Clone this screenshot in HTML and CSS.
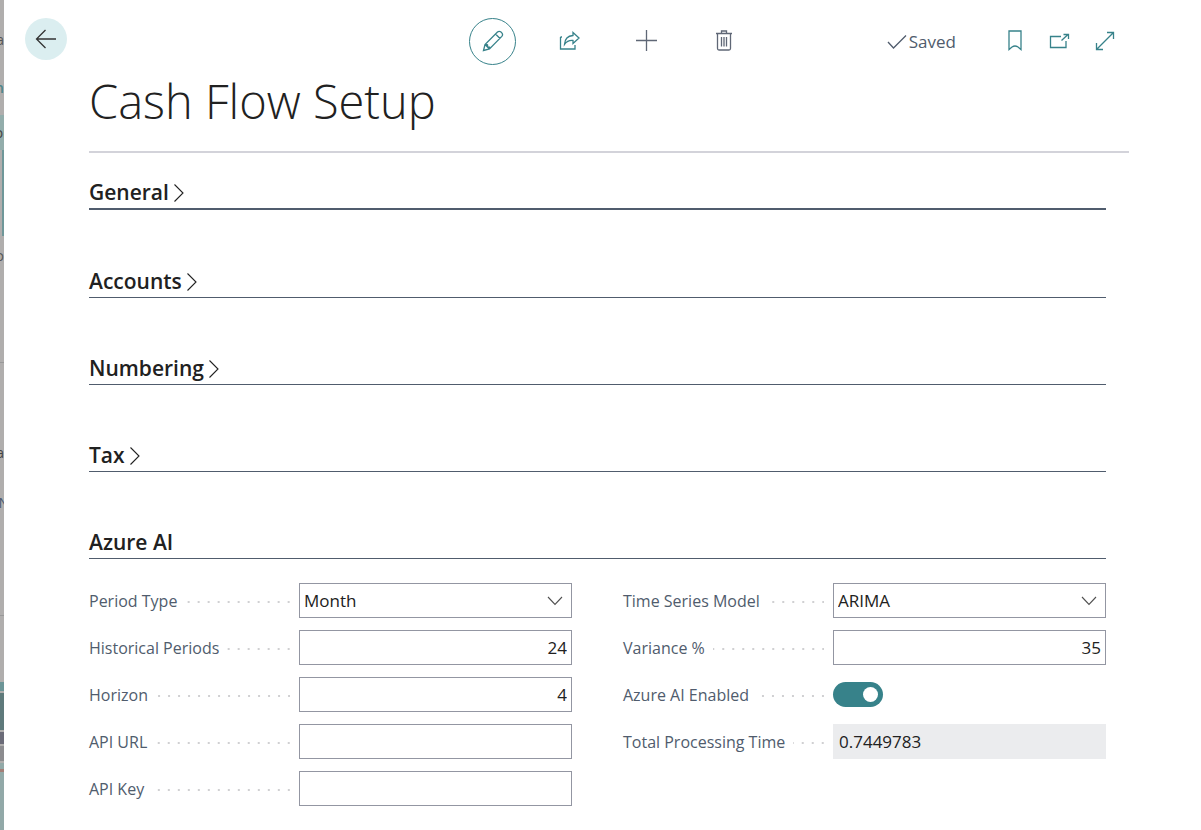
FILE: index.html
```html
<!DOCTYPE html>
<html lang="en">
<head>
  <meta charset="UTF-8">
  <title>Cash Flow Setup</title>
  <link rel="stylesheet" href="styles.css">
</head>
<body>

  <!-- dimmed page behind the card -->
  <div class="behind" aria-hidden="true">
    <div class="band band-top">a</div>
    <div class="band band-brand">n</div>
    <div class="band band-menu"><span class="peek">or</span></div>
    <div class="band band-tile"></div>
    <div class="band band-link">o</div>
    <div class="band band-a">a</div>
    <div class="band band-n"><span class="peek">N</span></div>
    <div class="band band-space"></div>
    <div class="band band-teal"></div>
    <div class="band band-dark"></div>
    <div class="band band-slate"></div>
    <div class="band band-grey"></div>
    <div class="band band-chart"></div>
  </div>

  <div class="back">
    <button class="back-button" aria-label="Back">
      <svg width="22" height="20" viewBox="0 0 22 20"><path d="M21 10H2M10.500 1L1.500 10l9 9"/></svg>
    </button>
  </div>

  <main class="page">
    <header class="toolbar">
      <div class="actions">
        <button class="action action-edit" aria-label="Edit">
          <svg width="22" height="22" viewBox="0 0 22 22"><path d="M1.500 20.500L3 14.500L15.500 2q1.500-1.300 3.200-.2l1.300 1.300q1.200 1.700-.2 3.300L7.500 19zM3 14.500l4.500 4.500M13.500 4l4.500 4.500M3 14.500l2.500.300.200 2 1.800.200v2"/></svg>
        </button>
        <button class="action" aria-label="Share">
          <svg width="22" height="20" viewBox="0 0 22 20"><path d="M1.500 6v12h14.500v-4M1.500 6h1.500M14 1.500l6 5.500l-6 5.500V9.500Q8.500 9 5.500 13.500Q6 5 14 4.500z"/></svg>
        </button>
        <button class="action action-grey" aria-label="New">
          <svg width="21" height="21" viewBox="0 0 21 21"><path d="M10.500 0v21M0 10.500h21"/></svg>
        </button>
        <button class="action action-grey" aria-label="Delete">
          <svg width="18" height="21" viewBox="0 0 18 21"><path d="M1 3.500h16M6.500 3V1h5v2M2.500 3.500v15q0 1.500 1.500 1.500h10q1.500 0 1.500-1.500v-15M6.500 7v9.500M9 7v9.500M11.500 7v9.500"/></svg>
        </button>
      </div>
      <div class="tools">
        <span class="saved">
          <svg width="20" height="16" viewBox="0 0 20 16"><path d="M1 8l5.500 6L19 1.500"/></svg>
          Saved
        </span>
        <button class="tool" aria-label="Bookmark">
          <svg width="14" height="21" viewBox="0 0 14 21"><path d="M1 1h12v18.500l-3-2.500q-3-2-6 0l-3 2.500z"/></svg>
        </button>
        <button class="tool" aria-label="Open in new window">
          <svg width="21" height="16" viewBox="0 0 21 16"><path d="M12 3.500H1.500v11h15.500V8M12.500 7.500l6.500-6M14.500 1.500H19.500V6"/></svg>
        </button>
        <button class="tool" aria-label="Expand">
          <svg width="20" height="20" viewBox="0 0 20 20"><path d="M1.500 18.500l17-17M12 1.500h6.500V8M1.500 12v6.500H8"/></svg>
        </button>
      </div>
    </header>

    <h1 class="title">Cash Flow Setup</h1>

    <div class="sections">
      <h2 class="section section-first">
        <button class="section-button">General
          <svg width="12" height="20" viewBox="0 0 12 20"><path d="M1.500 1.500L10 10l-8.500 8.500"/></svg>
        </button>
      </h2>
      <h2 class="section">
        <button class="section-button">Accounts
          <svg width="12" height="20" viewBox="0 0 12 20"><path d="M1.500 1.500L10 10l-8.500 8.500"/></svg>
        </button>
      </h2>
      <h2 class="section">
        <button class="section-button">Numbering
          <svg width="12" height="20" viewBox="0 0 12 20"><path d="M1.500 1.500L10 10l-8.500 8.500"/></svg>
        </button>
      </h2>
      <h2 class="section">
        <button class="section-button">Tax
          <svg width="12" height="20" viewBox="0 0 12 20"><path d="M1.500 1.500L10 10l-8.500 8.500"/></svg>
        </button>
      </h2>
      <h2 class="section section-open">
        <button class="section-button">Azure AI</button>
      </h2>

      <form class="fields">
        <div class="column">
          <div class="row">
            <label class="label" for="periodType">Period Type</label>
            <div class="drop">
              <select class="box" id="periodType"><option>Month</option></select>
              <svg width="16" height="10" viewBox="0 0 16 10"><path d="M1 1l7 7.500L15 1"/></svg>
            </div>
          </div>
          <div class="row">
            <label class="label" for="periods">Historical Periods</label>
            <input class="box number" type="text" id="periods" value="24">
          </div>
          <div class="row">
            <label class="label" for="horizon">Horizon</label>
            <input class="box number" type="text" id="horizon" value="4">
          </div>
          <div class="row">
            <label class="label" for="apiUrl">API URL</label>
            <input class="box" type="text" id="apiUrl">
          </div>
          <div class="row">
            <label class="label" for="apiKey">API Key</label>
            <input class="box" type="text" id="apiKey">
          </div>
        </div>
        <div class="column">
          <div class="row">
            <label class="label" for="model">Time Series Model</label>
            <div class="drop">
              <select class="box" id="model"><option>ARIMA</option></select>
              <svg width="16" height="10" viewBox="0 0 16 10"><path d="M1 1l7 7.500L15 1"/></svg>
            </div>
          </div>
          <div class="row">
            <label class="label" for="variance">Variance %</label>
            <input class="box number" type="text" id="variance" value="35">
          </div>
          <div class="row">
            <label class="label" for="enabled">Azure AI Enabled</label>
            <input class="switch" type="checkbox" id="enabled" checked>
          </div>
          <div class="row">
            <label class="label" for="total">Total Processing Time</label>
            <input class="box readonly" type="text" id="total" value="0.7449783" readonly>
          </div>
        </div>
      </form>
    </div>
  </main>

</body>
</html>
```
FILE: styles.css
```css
* {
  box-sizing: border-box;
}

body {
  margin: 0;
  display: flex;
  min-height: 100vh;
  background-color: #fff;
  color: #212121;
  font-family: "Segoe UI", "Open Sans", "Noto Sans", sans-serif;
  font-size: 17px;
}

button, input, select {
  font: inherit;
  color: inherit;
}

button {
  padding: 0;
  border: none;
  background: none;
  cursor: pointer;
}

svg {
  display: block;
  flex: none;
  fill: none;
  stroke: currentColor;
  stroke-width: 1.3;
}

/* Strip of the page behind */
.behind {
  width: 4px;
  flex: none;
  display: flex;
  flex-direction: column;
  overflow: hidden;
  background-color: #b0aead;
  color: #555;
  font-size: 14px;
}

.band {
  display: flex;
  justify-content: flex-end;
  align-items: center;
  flex: none;
}

.peek {
  margin-right: -5px;
}

.band-top { height: 78px; }
.band-brand { height: 37px; align-items: flex-start; color: #4d8588; font-weight: 600; }
.band-menu { height: 35px; background-color: #93adab; color: #444; }
.band-tile { height: 86px; border-right: 2px solid #6f9799; }
.band-link { height: 127px; border-bottom: 1px solid #999; align-items: flex-start; padding-top: 10px; }
.band-a { height: 130px; color: #444; padding-top: 48px; }
.band-n { height: 123px; color: #4a5a70; align-items: flex-start; border-bottom: 1px solid #999; }
.band-space { height: 66px; }
.band-teal { height: 9px; background-color: #6c9597; }
.band-dark { height: 39px; background-color: #5f7a7b; border-top: 2px solid #b0aead; }
.band-slate { height: 14px; background-color: #6b6b78; border-top: 2px solid #b0aead; }
.band-grey { height: 17px; background-color: #8c8c8f; border-top: 2px solid #b0aead; }
.band-chart {
  flex: 1;
  background: linear-gradient(#b0aead 2px, #92a9a8 2px, #92a9a8 8px, #a47f78 8px, #a47f78 11px, #92a9a8 11px);
}

.back {
  width: 85px;
  flex: none;
  padding: 18px 0 0 21px;
}

.back-button {
  width: 42px;
  height: 42px;
  display: grid;
  place-items: center;
  border-radius: 50%;
  background-color: #dbeef0;
  color: #333;
}

.page {
  flex: 1;
  padding: 18px 72px 24px 0;
}

/* Toolbar */
.toolbar {
  display: grid;
  grid-template-columns: 1fr auto 1fr;
  align-items: center;
  padding-right: 2px;
}

.actions {
  grid-column: 2;
  display: flex;
  gap: 30px;
}

.action {
  width: 47px;
  height: 47px;
  padding-bottom: 2px;
  display: grid;
  place-items: center;
  border-radius: 50%;
  color: #37828a;
}

.action-edit {
  border: 1px solid #37828a;
}

.action-grey {
  color: #5f6776;
}

.tools {
  display: flex;
  align-items: center;
  justify-content: flex-end;
}

.saved {
  display: flex;
  align-items: center;
  gap: 2px;
  margin-right: 36px;
  color: #505c6d;
}

.tool {
  width: 45px;
  height: 47px;
  padding-bottom: 2px;
  display: grid;
  place-items: center;
  color: #37828a;
}

.title {
  margin: 0;
  padding-bottom: 14px;
  border-bottom: 2px solid #d3d3da;
  font-size: 47px;
  font-weight: 300;
  line-height: 72px;
}

/* Fast tabs */
.sections {
  padding: 19px 23px 0 0;
}

.section {
  height: 37px;
  margin: 0 0 50px;
  border-bottom: 1px solid #505c6d;
  font-size: 21px;
  font-weight: 600;
}

.section-first {
  height: 38px;
  margin-bottom: 51px;
  border-bottom-width: 2px;
}

.section-open {
  margin-bottom: 24px;
}

.section-button {
  display: flex;
  align-items: center;
  gap: 4px;
  line-height: 40px;
}

.section-button svg {
  margin-top: 2px;
  stroke-width: 1.1;
}

/* Form */
.fields {
  display: grid;
  grid-template-columns: 1fr 1fr;
  gap: 51px;
}

.column {
  display: flex;
  flex-direction: column;
  gap: 12px;
}

.row {
  display: grid;
  grid-template-columns: 201px 1fr;
  column-gap: 9px;
  align-items: center;
  height: 35px;
}

.label {
  display: flex;
  align-items: center;
  gap: 8px;
  color: #505c6d;
  font-size: 16px;
  line-height: 24px;
  white-space: nowrap;
}

/* dotted leader up to the field */
.label::after {
  content: "";
  flex: 1;
  height: 2px;
  margin-top: 2px;
  background: linear-gradient(90deg, transparent 8px, #d0d0d2 8px) right / 10px 2px repeat-x;
}

.drop {
  position: relative;
}

.drop svg {
  position: absolute;
  right: 9px;
  top: 13px;
  color: #505050;
  stroke-width: 1.1;
  pointer-events: none;
}

.box {
  display: block;
  width: 100%;
  height: 35px;
  padding: 0 4px;
  border: 1px solid #9396a2;
  border-radius: 0;
  background-color: #fff;
  appearance: none;
}

.number {
  text-align: right;
}

.readonly {
  padding: 0 6px;
  border: none;
  background-color: #ebecee;
}

.switch {
  appearance: none;
  width: 50px;
  height: 25px;
  margin: 0;
  padding: 5px;
  display: flex;
  justify-content: flex-end;
  border-radius: 13px;
  background-color: #37828a;
}

.switch::before {
  content: "";
  width: 15px;
  height: 15px;
  border-radius: 50%;
  background-color: #fff;
}

.switch:not(:checked) {
  justify-content: flex-start;
  background-color: #9396a2;
}
```
